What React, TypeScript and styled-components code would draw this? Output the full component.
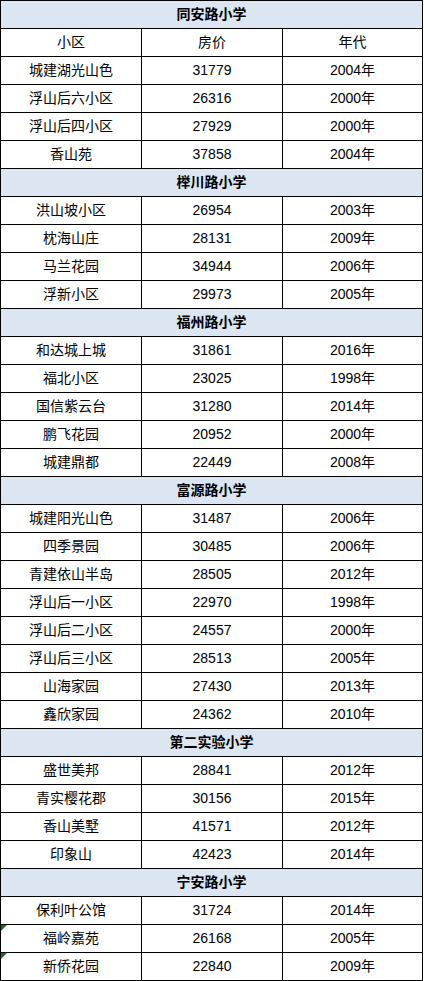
import React from 'react'
import styled, { createGlobalStyle } from 'styled-components'

const Global = createGlobalStyle`
  body {
    margin: 0;
    background: #ffffff;
    font-family: "Liberation Sans", "Noto Sans CJK SC", sans-serif;
  }
`

type Row = [string, string, string, boolean?]
type Section = { school: string; rows: Row[] }

const sections: Section[] = [
  {
    school: '同安路小学',
    rows: [
      ['城建湖光山色', '31779', '2004年'],
      ['浮山后六小区', '26316', '2000年'],
      ['浮山后四小区', '27929', '2000年'],
      ['香山苑', '37858', '2004年'],
    ],
  },
  {
    school: '榉川路小学',
    rows: [
      ['洪山坡小区', '26954', '2003年'],
      ['枕海山庄', '28131', '2009年'],
      ['马兰花园', '34944', '2006年'],
      ['浮新小区', '29973', '2005年'],
    ],
  },
  {
    school: '福州路小学',
    rows: [
      ['和达城上城', '31861', '2016年'],
      ['福北小区', '23025', '1998年'],
      ['国信紫云台', '31280', '2014年'],
      ['鹏飞花园', '20952', '2000年'],
      ['城建鼎都', '22449', '2008年'],
    ],
  },
  {
    school: '富源路小学',
    rows: [
      ['城建阳光山色', '31487', '2006年'],
      ['四季景园', '30485', '2006年'],
      ['青建依山半岛', '28505', '2012年'],
      ['浮山后一小区', '22970', '1998年'],
      ['浮山后二小区', '24557', '2000年'],
      ['浮山后三小区', '28513', '2005年'],
      ['山海家园', '27430', '2013年'],
      ['鑫欣家园', '24362', '2010年'],
    ],
  },
  {
    school: '第二实验小学',
    rows: [
      ['盛世美邦', '28841', '2012年'],
      ['青实樱花郡', '30156', '2015年'],
      ['香山美墅', '41571', '2012年'],
      ['印象山', '42423', '2014年'],
    ],
  },
  {
    school: '宁安路小学',
    rows: [
      ['保利叶公馆', '31724', '2014年'],
      ['福岭嘉苑', '26168', '2005年', true],
      ['新侨花园', '22840', '2009年', true],
    ],
  },
]

const Table = styled.table`
  border-collapse: collapse;
  width: 422px;
  table-layout: fixed;
  color: #000;
  font-size: 14px;
`

const Cell = styled.td`
  position: relative;
  height: 27px;
  padding: 0;
  border: 1px solid #000;
  text-align: center;
  vertical-align: middle;
  line-height: 27px;
  white-space: nowrap;
`

const SchoolCell = styled(Cell)`
  background: #dce6f2;
  font-weight: bold;
`

const Flag = styled.span`
  position: absolute;
  left: 0;
  top: 0;
  width: 0;
  height: 0;
  border-top: 6px solid #1e6b2a;
  border-right: 6px solid transparent;
`

export default function App() {
  return (
    <>
      <Global />
      <Table>
        <colgroup>
          <col style={{ width: 141 }} />
          <col style={{ width: 141 }} />
          <col style={{ width: 140 }} />
        </colgroup>
        <tbody>
          {sections.map((s, i) => (
            <React.Fragment key={s.school}>
              <tr>
                <SchoolCell colSpan={3}>{s.school}</SchoolCell>
              </tr>
              {i === 0 && (
                <tr>
                  <Cell>小区</Cell>
                  <Cell>房价</Cell>
                  <Cell>年代</Cell>
                </tr>
              )}
              {s.rows.map(([name, price, year, flag]) => (
                <tr key={name}>
                  <Cell>
                    {flag && <Flag />}
                    {name}
                  </Cell>
                  <Cell>{price}</Cell>
                  <Cell>{year}</Cell>
                </tr>
              ))}
            </React.Fragment>
          ))}
        </tbody>
      </Table>
    </>
  )
}
